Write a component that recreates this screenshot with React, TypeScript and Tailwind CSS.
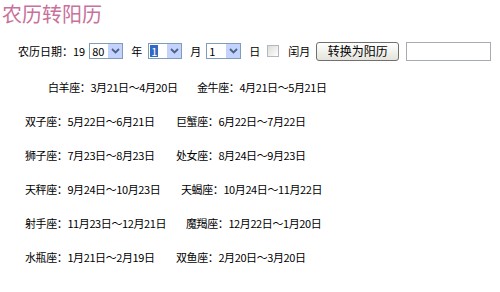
const font = {
  fontFamily: '"SimSun", "Noto Sans CJK SC", "Liberation Sans", sans-serif',
};

function Chevron() {
  return (
    <svg width="9" height="6" viewBox="0 0 9 6">
      <path d="M1 1 L4.5 4.5 L8 1" fill="none" stroke="#4d6185" strokeWidth="1.8" />
    </svg>
  );
}

function FakeSelect({ value, width, active }: { value: string; width: string; active?: boolean }) {
  return (
    <div className={`flex h-[16px] items-center border border-[#7f9db9] bg-white ${width}`}>
      <div className="flex flex-1 items-center pl-[1px]">
        <span
          className={`px-[1px] text-[11px] leading-[12px] ${active ? "bg-[#316ac5] text-white" : "text-black"}`}
        >
          {value}
        </span>
      </div>
      <div className="flex h-full w-[15px] items-center justify-center border-l border-white bg-[#c3d3fd]">
        <Chevron />
      </div>
    </div>
  );
}

const rows: [string, string, string][] = [
  ["w-[151px]", "双子座：5月22日～6月21日", "巨蟹座：6月22日～7月22日"],
  ["w-[151px]", "狮子座：7月23日～8月23日", "处女座：8月24日～9月23日"],
  ["w-[156px]", "天秤座：9月24日～10月23日", "天蝎座：10月24日～11月22日"],
  ["w-[161px]", "射手座：11月23日～12月21日", "魔羯座：12月22日～1月20日"],
  ["w-[151px]", "水瓶座：1月21日～2月19日", "双鱼座：2月20日～3月20日"],
];

export default function App() {
  return (
    <div className="h-[292px] w-[500px] overflow-hidden bg-white text-black" style={font}>
      <h1 className="pl-[2px] pt-[2px] text-[20px] leading-[24px] text-[#c8719a]">农历转阳历</h1>

      <div className="mt-[15px] flex h-[20px] items-center pl-[18px] text-[11px]">
        <span>农历日期：19</span>
        <div className="ml-[4px]">
          <FakeSelect value="80" width="w-[34px]" />
        </div>
        <span className="ml-[8px]">年</span>
        <div className="ml-[6px]">
          <FakeSelect value="1" width="w-[34px]" active />
        </div>
        <span className="ml-[8px]">月</span>
        <div className="ml-[5px]">
          <FakeSelect value="1" width="w-[35px]" />
        </div>
        <span className="ml-[8px]">日</span>
        <div className="ml-[7px] h-[12px] w-[12px] border border-[#b0b8c4] bg-gradient-to-br from-[#dcdcd8] to-white" />
        <span className="ml-[9px]">闰月</span>
        <button className="ml-[6px] h-[19px] w-[83px] rounded-[3px] border border-[#707070] bg-gradient-to-b from-white to-[#e4e4dc] text-[12px] leading-[16px]">
          转换为阳历
        </button>
        <div className="ml-[7px] h-[19px] w-[85px] border border-[#a5acb5] bg-white" />
      </div>

      <div className="mt-[18px] flex h-[16px] items-center pl-[48px] text-[11px] tracking-[-0.4px]">
        <span className="w-[149px]">白羊座：3月21日～4月20日</span>
        <span>金牛座：4月21日～5月21日</span>
      </div>

      {rows.map(([w, a, b]) => (
        <div key={a} className="mt-[18px] flex h-[16px] items-center pl-[25px] text-[11px] tracking-[-0.4px]">
          <span className={w}>{a}</span>
          <span>{b}</span>
        </div>
      ))}
    </div>
  );
}
